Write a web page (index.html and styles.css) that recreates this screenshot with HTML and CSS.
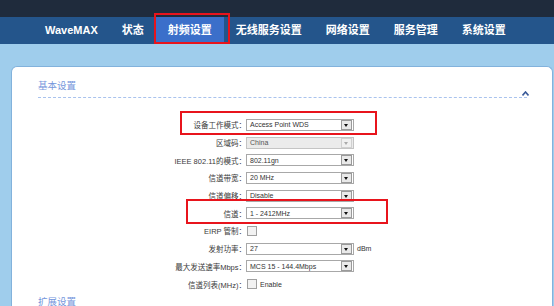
FILE: index.html
```html
<!DOCTYPE html>
<html lang="zh-CN">
<head>
    <meta charset="UTF-8">
    <meta name="viewport" content="width=device-width, initial-scale=1.0">
    <title>射频设置</title>
    <link rel="stylesheet" href="styles.css">
</head>
<body>
    <div class="topbar"></div>

    <!-- Main menu -->
    <div class="nav">
        <span class="nav-item brand">WaveMAX</span>
        <span class="nav-item">状态</span>
        <span class="nav-item active">射频设置</span>
        <span class="nav-item">无线服务设置</span>
        <span class="nav-item">网络设置</span>
        <span class="nav-item">服务管理</span>
        <span class="nav-item">系统设置</span>
    </div>

    <div class="main">
        <div class="panel">
            <div class="sec-head">
                基本设置
                <svg class="collapse" width="7" height="5" viewBox="0 0 7 5">
                    <path d="M0.5 4.5 L3.5 1 L6.5 4.5" fill="none" stroke="#3b5b9a" stroke-width="1.6"/>
                </svg>
            </div>

            <div class="form">
                <div class="row">
                    <span class="lbl">设备工作模式：</span>
                    <div class="sel"><span class="sel-text">Access Point WDS</span><span class="sel-btn"></span></div>
                </div>
                <div class="row">
                    <span class="lbl">区域码：</span>
                    <div class="sel disabled"><span class="sel-text">China</span><span class="sel-btn"></span></div>
                </div>
                <div class="row">
                    <span class="lbl">IEEE 802.11的模式：</span>
                    <div class="sel"><span class="sel-text">802.11gn</span><span class="sel-btn"></span></div>
                </div>
                <div class="row">
                    <span class="lbl">信道带宽：</span>
                    <div class="sel"><span class="sel-text">20 MHz</span><span class="sel-btn"></span></div>
                </div>
                <div class="row">
                    <span class="lbl">信道偏移：</span>
                    <div class="sel"><span class="sel-text">Disable</span><span class="sel-btn"></span></div>
                </div>
                <div class="row">
                    <span class="lbl">信道：</span>
                    <div class="sel"><span class="sel-text">1 - 2412MHz</span><span class="sel-btn"></span></div>
                </div>
                <div class="row">
                    <span class="lbl">EIRP 管制：</span>
                    <span class="check"></span>
                </div>
                <div class="row">
                    <span class="lbl">发射功率：</span>
                    <div class="sel"><span class="sel-text">27</span><span class="sel-btn"></span></div>
                    <span class="unit">dBm</span>
                </div>
                <div class="row">
                    <span class="lbl">最大发送速率Mbps：</span>
                    <div class="sel"><span class="sel-text">MCS 15 - 144.4Mbps</span><span class="sel-btn"></span></div>
                </div>
                <div class="row">
                    <span class="lbl">信道列表(MHz)：</span>
                    <span class="check"></span>
                    <span class="check-text">Enable</span>
                </div>
            </div>

            <div class="sec-title">扩展设置</div>
        </div>
    </div>

    <!-- red annotation boxes -->
    <div class="mark mark-nav"></div>
    <div class="mark mark-mode"></div>
    <div class="mark mark-channel"></div>
</body>
</html>
```

FILE: styles.css
```css
body {
    margin: 0;
    background-color: #9fcdec;
    font-family: "Liberation Sans", "Noto Sans CJK SC", sans-serif;
    height: 306px;
    overflow: hidden;
}

.topbar {
    height: 17px;
    background-color: #1f2b3c;
}

.nav {
    display: flex;
    height: 27px;
    padding-left: 33px;
    background-color: #24558b;
}

.nav-item {
    padding: 0 12px;
    line-height: 27px;
    color: #fff;
    font-size: 11px;
    font-weight: bold;
}

.nav-item.active {
    background-color: #3b6fca;
}

.main {
    padding: 22px 1px 0 11px;
}

.panel {
    height: 239px;
    overflow: hidden;
    background-color: #fff;
    border: 1px solid #82b2dc;
    border-bottom: none;
    border-radius: 6px 6px 0 0;
}

.sec-head {
    position: relative;
    height: 31px;
    box-sizing: border-box;
    margin: 0 25px 0 26px;
    padding-top: 13px;
    border-bottom: 1px dashed #a9c3ee;
    font-size: 9.5px;
    line-height: 12px;
    color: #7596dc;
}

.collapse {
    position: absolute;
    right: -2px;
    bottom: 1px;
}

.form {
    margin-top: 18px;
}

.row {
    display: flex;
    align-items: center;
    height: 17.7px;
}

.lbl {
    width: 234px;
    text-align: right;
    font-size: 7.5px;
    color: #3a3a3a;
    white-space: nowrap;
}

.sel {
    display: flex;
    align-items: center;
    width: 108px;
    height: 12px;
    box-sizing: border-box;
    border: 1px solid #a8a8a8;
    background-color: #fff;
}

.sel-text {
    flex: 1;
    padding-left: 3px;
    font-size: 7px;
    color: #333;
}

.sel-btn {
    position: relative;
    width: 9px;
    height: 8px;
    margin-right: 1px;
    border: 1px solid #9a9a9a;
    background-color: #e9e9e9;
}

.sel-btn::after {
    content: "";
    position: absolute;
    left: 2px;
    top: 3px;
    border-left: 2.5px solid transparent;
    border-right: 2.5px solid transparent;
    border-top: 3px solid #111;
}

.sel.disabled {
    background-color: #ebebeb;
    border-color: #c4c4c4;
}

.sel.disabled .sel-text {
    color: #555;
}

.sel.disabled .sel-btn {
    border-color: #d0d0d0;
    background-color: #f0f0f0;
}

.sel.disabled .sel-btn::after {
    border-top-color: #aaa;
}

.unit,
.check-text {
    margin-left: 3px;
    font-size: 7px;
    color: #333;
}

.check {
    width: 8px;
    height: 8px;
    margin-left: 1px;
    border: 1px solid #a0a0a0;
    background-color: #f2f2f2;
}

.sec-title {
    margin: 3px 0 0 26px;
    font-size: 9.5px;
    line-height: 12px;
    color: #7596dc;
}

.mark {
    position: absolute;
    border: 2px solid #e8141c;
    box-sizing: border-box;
}

.mark-nav {
    left: 154px;
    top: 13px;
    width: 76px;
    height: 31px;
}

.mark-mode {
    left: 180px;
    top: 111px;
    width: 197px;
    height: 24px;
}

.mark-channel {
    left: 186px;
    top: 199px;
    width: 202px;
    height: 25px;
}
```
